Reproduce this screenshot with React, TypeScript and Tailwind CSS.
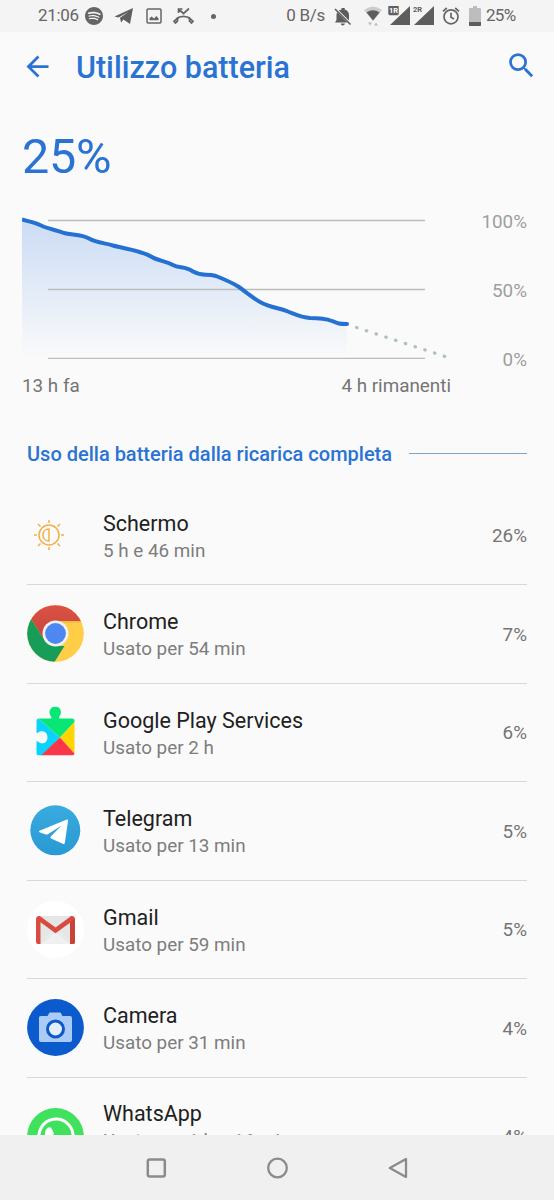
import type { ReactNode } from 'react';
import { SiSpotify } from 'react-icons/si';
import { MdArrowBack, MdSearch } from 'react-icons/md';

type Usage = {
  name: string;
  detail: string;
  percent: string;
  icon: ReactNode;
  tall?: boolean;
};

const StatusBar = () => (
  <div className="flex h-8 shrink-0 items-center bg-[#f4f4f4] pl-[38px] pr-[37px] text-[#666]">
    <span className="w-[47px] whitespace-nowrap text-[17px] tracking-[-0.35px]">21:06</span>
    <SiSpotify className="h-[18px] w-[18px]" />
    <svg className="ml-[11px] h-[18px] w-5" viewBox="0 0 20 18" fill="#5f5f5f">
      <path d="M.5 9.500 19 1 16 17 9.500 12.500 7 15.500 6 10.800 14.500 5 4.300 10.500Z" />
    </svg>
    <svg className="ml-3 h-4 w-4" viewBox="0 0 16 16" fill="none" stroke="#666" strokeWidth="1.500">
      <rect x="1" y="1" width="14" height="14" rx="1" />
      <path d="m3.500 12.300v-2l2-1.800 2.500 2 2.500-2.500 2 2.500v1.800Z" fill="#666" stroke="none" />
    </svg>
    <svg className="ml-[11px] h-[18px] w-[21px]" viewBox="0 0 21 18" fill="none" stroke="#666" strokeWidth="1.700">
      <path d="M5.500 6V2h4M6 2.500l4.500 4L16 1.500M3.500 12c4-3.500 10-3.500 14 0" />
      <path d="M4.500 11.200v3L2.500 16 1 14.300ZM16.500 11.200v3l2 1.800 1.500-1.700Z" />
    </svg>
    <span className="ml-[17px] h-[5px] w-[5px] rounded-full bg-[#666]" />
    <span className="ml-auto whitespace-nowrap text-[17px] tracking-[-0.3px]">0 B/s</span>
    <svg className="ml-[9px] h-[19px] w-[18px]" viewBox="0 0 18 19" fill="#5d5d5d">
      <path d="M4.800 3.500 15 13.500V8c0-2.800-1.700-4.800-4.300-5.400V1H7.500v1.600c-1 .2-1.900.5-2.700.9ZM3.200 5.300C2.700 6.100 2.500 7 2.500 8v5L1 15.500h12.300ZM6.800 16.500h4c0 2.500-4 2.500-4 0Z" />
      <path d="m1 2 15.500 15.500" stroke="#5d5d5d" strokeWidth="1.600" />
    </svg>
    <svg className="ml-3 h-5 w-[18px]" viewBox="0 0 18 20">
      <path d="M0 4Q9-3 18 4L9 15Z" fill="#ccc" />
      <path d="M2.500 6.500Q9 2 15.500 6.500L9 14.500Z" fill="#5d5d5d" />
      <path d="M4 16.500h4L6 19.500ZM10 19.500h4l-2-3Z" fill="#bbb" />
    </svg>
    <svg className="ml-[6px] h-5 w-[22px]" viewBox="0 0 22 20" fill="#5d5d5d">
      <path d="M22 0v19H2Z" />
      <rect y="-1" width="11" height="10.500" rx="2" fill="#606060" stroke="#f4f4f4" strokeWidth=".5" />
      <text x="1" y="7" fontSize="7.500" fontWeight="700" fill="#fff">1R</text>
    </svg>
    <svg className="ml-[3px] h-5 w-[21px]" viewBox="0 0 21 20" fill="#5d5d5d">
      <path d="M21 0v19H1Z" />
      <text x="0" y="6" fontSize="7.500" fontWeight="700" fill="#5d5d5d">2R</text>
    </svg>
    <svg className="ml-2 h-[18px] w-[18px]" viewBox="0 0 18 18" fill="none" stroke="#666" strokeWidth="1.700">
      <circle cx="9" cy="9.800" r="7" />
      <path d="M9 5.800v4.500l3 1.800M1 4.300 4.800 1M17 4.300 13.200 1" />
    </svg>
    <svg className="ml-[9px] h-5 w-3" viewBox="0 0 12 20">
      <path d="M4 0h4v2h3q1 0 1 1v16q0 1-1 1H1q-1 0-1-1V3q0-1 1-1h3Z" fill="#bdbdbd" />
      <path d="M0 16h12v3q0 1-1 1H1q-1 0-1-1Z" fill="#5d5d5d" />
    </svg>
    <span className="ml-[5px] w-[31px] whitespace-nowrap text-[17px] tracking-[-0.7px]">25%</span>
  </div>
);

const linePath =
  'M0 9.500C7 11.500 13 12.500 18 15C26 19 34 20 42 23C50 25 60 24.500 67 28.500C75 33 84 33 91 35.500C103 39 118 40 129 46.500C136 51 143 50.500 151 55C157 58.500 163 56 171 61.500C181 67 184 63 194 66C204 70 211 73 217 77C224 82 232 89 239 92.500C249 98 257 97.500 266 101.500C275 105 280 107.500 288 108C296 108 302 108 310 111C316 113.500 317 114 325 114';

const BatteryChart = () => (
  <svg className="mt-[25px] block h-[155px] w-[440px]" viewBox="0 0 440 155" fill="none">
    <defs>
      <linearGradient id="fade" x1="0" y1="0" x2="0" y2="1">
        <stop offset="0" stopColor="#cbdcf5" />
        <stop offset="1" stopColor="#fafafa" />
      </linearGradient>
    </defs>
    <path d={`${linePath}V148H0Z`} fill="url(#fade)" />
    <path d="M26 10.500h377M26 79.500h377M26 148.300h377" stroke="#bdbdbd" strokeWidth="1.300" />
    <path d={linePath} stroke="#2471d1" strokeWidth="4" />
    <circle cx="325" cy="114" r="2" fill="#2471d1" />
    <path
      d="M334.500 117.500 424 146.800"
      stroke="#b0bec5"
      strokeWidth="3.200"
      strokeLinecap="round"
      strokeDasharray="0.600 9.650"
    />
  </svg>
);

const ScreenIcon = () => (
  <svg className="mr-[13px] h-[30px] w-[30px]" viewBox="0 0 30 30" fill="none" stroke="#efb04a" strokeWidth="1.500">
    <circle cx="15" cy="15" r="10" />
    <path d="M15 9v12c-8 0-8-12 0-12ZM15 3V0M15 30v-3M3 15H0M30 15h-3M6.500 6.500 4 4M26 4l-2.500 2.500M6.500 23.500 4 26M26 26l-2.500-2.500" />
  </svg>
);

const ChromeIcon = () => (
  <svg className="h-[57px] w-[57px]" viewBox="0 0 57 57">
    <defs>
      <clipPath id="chromeDisc">
        <circle cx="28.500" cy="28.500" r="28.300" />
      </clipPath>
      <linearGradient id="chromeRed" x1="0" y1="0" x2="0" y2="1">
        <stop offset="0" stopColor="#dd5144" />
        <stop offset="1" stopColor="#c3473b" />
      </linearGradient>
    </defs>
    <g clipPath="url(#chromeDisc)">
      <path d="M0 0h57v57H0Z" fill="#ffcd46" />
      <path d="M4.500 14.500 17.500 35l11 6h9L27.500 57H0V10Z" fill="#179d58" />
      <path d="M4.500 14.500V0H57v16H28.500L17.500 35Z" fill="url(#chromeRed)" />
      <path d="M28.500 16H54v2H35Z" fill="#e8b53f" opacity=".6" />
    </g>
    <circle cx="28.500" cy="28.500" r="13" fill="#f1f1f1" />
    <circle cx="28.500" cy="28.500" r="10.400" fill="#4d88f2" />
  </svg>
);

const PlayServicesIcon = () => (
  <svg className="h-[57px] w-[57px]" viewBox="0 1.500 57 57">
    <defs>
      <clipPath id="puzzle">
        <path d="M12 16h11q2 0 1.500-1.500C20.500 10 23 4 28.300 4S36 10 32 14.500q-.5 1.500 1.500 1.500H45q2.500 0 2.500 2.500v32Q47.500 53 45 53H12q-2.500 0-2.500-2.500V39.600q0-1.300 1.500-.6c4 4 9.500 1 9.500-4.300S15 27 11 30.300q-1.500.8-1.500-.8v-11Q9.500 16 12 16Z" />
      </clipPath>
    </defs>
    <g clipPath="url(#puzzle)">
      <path d="M8 13 33 35 14 55H8Z" fill="#0bd2fb" />
      <path d="M8 0h41v18L33 35 8 13Z" fill="#08e676" />
      <path d="M49 18v35L33 35Z" fill="#ffd400" />
      <path d="M33 35 50 54H13Z" fill="#fb364a" />
    </g>
  </svg>
);

const TelegramIcon = () => (
  <svg className="h-[57px] w-[57px]" viewBox="0 0 57 57">
    <defs>
      <linearGradient id="telegramSky" x1="0" y1="0" x2="0" y2="1">
        <stop offset="0" stopColor="#38abdf" />
        <stop offset="1" stopColor="#2999d3" />
      </linearGradient>
    </defs>
    <circle cx="28.300" cy="28.300" r="25" fill="url(#telegramSky)" />
    <path
      d="M12.500 28.800 39.200 17.800q2-.8 1.800 1.200L37.800 41q-.4 1.800-2 .7L24 36.500q-1.500-1 0-2.200l10.500-10.800-13.700 8.700q-.8.600-2 .2l-6.300-2.200q-1.200-.7 0-1.400Z"
      fill="#fff"
    />
  </svg>
);

const GmailIcon = () => (
  <svg className="h-[57px] w-[57px]" viewBox="0 0 57 57">
    <circle cx="28.500" cy="28.500" r="28.500" fill="#fff" />
    <path d="M12 15h33v28H12Z" fill="#e6e6e6" />
    <path d="m12 43 16.500-16L45 43Z" fill="#f0f0f0" />
    <path d="M13 43 28.500 30 44 43" fill="none" stroke="#d9d9d9" strokeWidth=".7" />
    <path d="M9 18.500q0-4 3.800-3.500L28.500 26.500 44.200 15q3.800-.5 3.800 3.500V41q0 2-2 2h-3V21.700L28.500 32.300 13.500 21.300V43H11q-2 0-2-2Z" fill="#d64c41" />
    <path d="M43 21.700 48 18V41q0 2-2 2h-3Z" fill="#c94238" />
  </svg>
);

const CameraIcon = () => (
  <svg className="h-[57px] w-[57px]" viewBox="0 0 57 57">
    <circle cx="28.500" cy="28.500" r="28.400" fill="#0b5bcd" />
    <path d="M13.500 17h7l2-3.500h11L35.500 17h7.500q2 0 2 2v22q0 2-2 2H14q-2 0-2-2V18.500q0-1.500 1.500-1.500Z" fill="#aacbf5" />
    <circle cx="28.500" cy="30" r="8" fill="#e4effd" stroke="#0d59c7" strokeWidth="3" />
  </svg>
);

const WhatsAppIcon = () => (
  <svg className="h-[57px] w-[57px]" viewBox="0 0 57 57">
    <circle cx="28.500" cy="28.500" r="28.400" fill="#3fe15d" />
    <path d="M11 46 14 36A17 17 0 1 1 21 43Z" fill="none" stroke="#fff" strokeWidth="3" />
    <path d="M21 19.500h3l3 6-2 3q3 6 8 8l3-3 6 3c-1 6-6 7-11 5-7-3-13-10-13-16q0-4 3-6Z" fill="#fff" />
  </svg>
);

const usages: Usage[] = [
  { name: 'Schermo', detail: '5 h e 46 min', percent: '26%', icon: <ScreenIcon /> },
  { name: 'Chrome', detail: 'Usato per 54 min', percent: '7%', icon: <ChromeIcon /> },
  { name: 'Google Play Services', detail: 'Usato per 2 h', percent: '6%', icon: <PlayServicesIcon /> },
  { name: 'Telegram', detail: 'Usato per 13 min', percent: '5%', icon: <TelegramIcon /> },
  { name: 'Gmail', detail: 'Usato per 59 min', percent: '5%', icon: <GmailIcon /> },
  { name: 'Camera', detail: 'Usato per 31 min', percent: '4%', icon: <CameraIcon /> },
  { name: 'WhatsApp', detail: 'Usato per 1 h e 16 min', percent: '4%', icon: <WhatsAppIcon />, tall: true },
];

const UsageRow = ({ name, detail, percent, icon, tall }: Usage) => (
  <li
    className={`flex shrink-0 items-center border-b border-[#d8d8d8] ${tall ? 'h-[118px]' : 'h-[98.500px]'}`}
  >
    <div className="flex w-[57px] shrink-0 justify-center">{icon}</div>
    <div className={`ml-[19px] flex-1 whitespace-nowrap pt-1 ${tall ? 'mb-[21px]' : ''}`}>
      <h3 className="text-[21.500px] leading-7 text-[#212121]">{name}</h3>
      <p className="text-[18.850px] leading-[27px] text-[#7d7d7d]">{detail}</p>
    </div>
    <span className="pt-0.5 text-[18.850px] text-[#757575]">{percent}</span>
  </li>
);

const NavBar = () => (
  <nav className="flex h-[65px] shrink-0 items-center justify-center gap-[98px] bg-[#f0f0f0]">
    <svg className="h-6 w-6" viewBox="0 0 24 24" fill="none" stroke="#8b8b8b" strokeWidth="2.500">
      <rect x="4.800" y="3.500" width="17" height="17" rx="2" />
    </svg>
    <svg className="h-6 w-6" viewBox="0 0 24 24" fill="none" stroke="#8b8b8b" strokeWidth="2.300">
      <circle cx="12.500" cy="12" r="9.300" />
    </svg>
    <svg className="h-6 w-6" viewBox="0 0 24 24" fill="none" stroke="#8b8b8b" strokeWidth="2.300" strokeLinejoin="round">
      <path d="M19 3v18L2.800 12Z" />
    </svg>
  </nav>
);

export default function App() {
  return (
    <div className="flex h-[1200px] w-[554px] flex-col overflow-hidden bg-[#fafafa] font-[Roboto,sans-serif]">
      <StatusBar />
      <header className="flex h-[70px] shrink-0 items-center px-[21px] text-[#2a73d3]">
        <MdArrowBack className="mb-0.5 h-[33px] w-[33px]" />
        <h1 className="ml-[22px] pt-0.5 text-[30.500px] font-medium">Utilizzo batteria</h1>
        <MdSearch className="mb-[3px] ml-auto mr-[-5px] h-[33px] w-[33px]" />
      </header>

      <main className="flex min-h-0 flex-1 flex-col overflow-hidden">
        <section className="h-[384.600px] shrink-0 px-[22px] text-[18.850px]">
          <p className="mt-[27px] text-[48.500px] leading-[56px] tracking-[-0.3px] text-[#2a73d3]">25%</p>
          <div className="flex justify-between">
            <div className="w-[440px]">
              <BatteryChart />
              <div className="mt-[9px] flex w-[429px] justify-between leading-6 text-[#757575]">
                <span>13 h fa</span>
                <span>4 h rimanenti</span>
              </div>
            </div>
            <div className="mr-[5px] mt-[25px] flex h-[162px] flex-col justify-between text-right leading-6 text-[#9e9e9e]">
              <span>100%</span>
              <span>50%</span>
              <span>0%</span>
            </div>
          </div>
          <div className="ml-[5px] mr-[5px] mt-[44px] flex items-center gap-[17px]">
            <h2 className="whitespace-nowrap text-[20px] font-medium leading-6 text-[#2a73d3]">
              Uso della batteria dalla ricarica completa
            </h2>
            <div className="mb-0.5 h-px flex-1 bg-[#7ea3c4]" />
          </div>
        </section>
        <ul className="mx-[27px] flex flex-col">
          {usages.map((usage) => (
            <UsageRow key={usage.name} {...usage} />
          ))}
        </ul>
      </main>
      <NavBar />
    </div>
  );
}
